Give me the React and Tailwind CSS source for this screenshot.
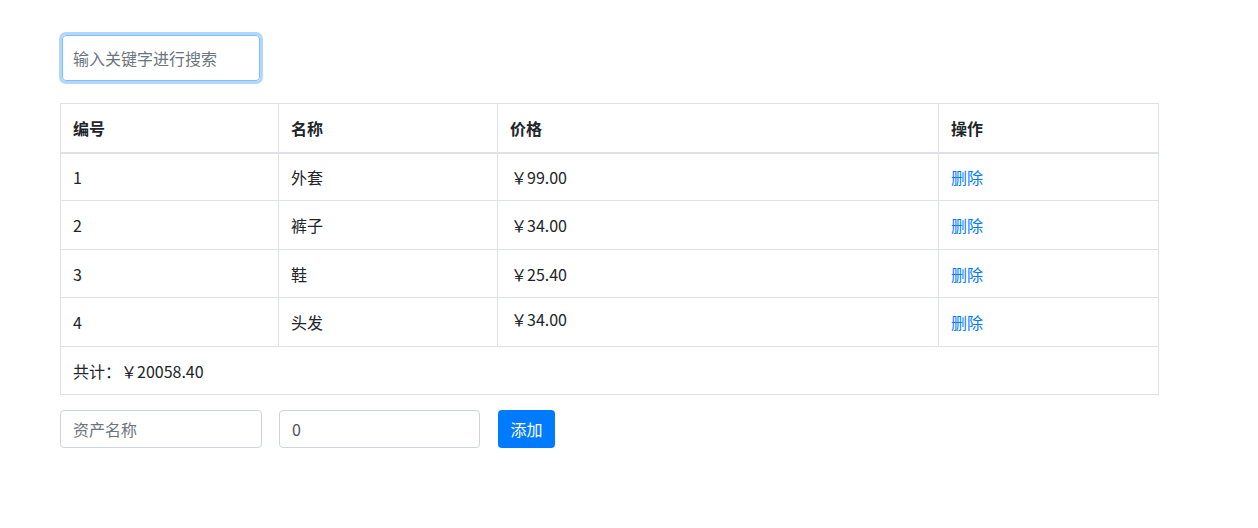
const rows = [
  { id: 1, name: "外套", price: "99.00", h: "h-[48px]" },
  { id: 2, name: "裤子", price: "34.00", h: "h-[49px]" },
  { id: 3, name: "鞋", price: "25.40", h: "h-[48px]" },
  { id: 4, name: "头发", price: "34.00", h: "h-[49px]", lift: true },
];

export default function App() {
  const font = { fontFamily: '"Noto Sans CJK SC", "Noto Sans", sans-serif' };
  return (
    <div className="min-h-[528px] bg-white pl-[60px] pt-[35px] text-[16px] text-[#212529]" style={font}>
      <input
        type="text"
        placeholder="输入关键字进行搜索"
        className="block h-[46px] w-[198px] ml-[2px] rounded-[4px] border border-[#80bdff] px-[10px] text-[16px] outline-none shadow-[0_0_0_3px_rgba(0,123,255,0.3)] placeholder:text-[#6c757d]"
      />

      <table className="mt-[22px] w-[1098px] table-fixed border-collapse border border-[#dee2e6]">
        <colgroup>
          <col className="w-[218px]" />
          <col className="w-[219px]" />
          <col className="w-[441px]" />
          <col className="w-[220px]" />
        </colgroup>
        <thead>
          <tr className="h-[49px]">
            <th className="border border-b-2 border-[#dee2e6] px-[12px] text-left font-bold">编号</th>
            <th className="border border-b-2 border-[#dee2e6] px-[12px] text-left font-bold">名称</th>
            <th className="border border-b-2 border-[#dee2e6] px-[12px] text-left font-bold">价格</th>
            <th className="border border-b-2 border-[#dee2e6] px-[12px] text-left font-bold">操作</th>
          </tr>
        </thead>
        <tbody>
          {rows.map((r) => (
            <tr key={r.id} className={r.h}>
              <td className="border border-[#dee2e6] px-[12px]">{r.id}</td>
              <td className="border border-[#dee2e6] px-[12px]">{r.name}</td>
              <td className={r.lift ? "border border-[#dee2e6] pl-[13px] pr-[12px] pb-[6px]" : "border border-[#dee2e6] pl-[13px] pr-[12px]"}>
                ￥{r.price}
              </td>
              <td className="border border-[#dee2e6] px-[12px]">
                <a href="#" className="text-[#007bff]">删除</a>
              </td>
            </tr>
          ))}
          <tr className="h-[48px]">
            <td colSpan={4} className="border border-[#dee2e6] px-[12px]">共计：￥20058.40</td>
          </tr>
        </tbody>
      </table>

      <div className="mt-[15px] flex items-center">
        <input
          type="text"
          placeholder="资产名称"
          className="h-[38px] w-[202px] rounded-[4px] border border-[#ced4da] px-[12px] text-[16px] outline-none placeholder:text-[#6c757d]"
        />
        <input
          type="text"
          defaultValue="0"
          className="ml-[17px] h-[38px] w-[201px] rounded-[4px] border border-[#ced4da] px-[12px] text-[16px] text-[#495057] outline-none"
        />
        <button className="ml-[18px] h-[38px] w-[57px] rounded-[4px] bg-[#007bff] text-[16px] text-white">添加</button>
      </div>
    </div>
  );
}
